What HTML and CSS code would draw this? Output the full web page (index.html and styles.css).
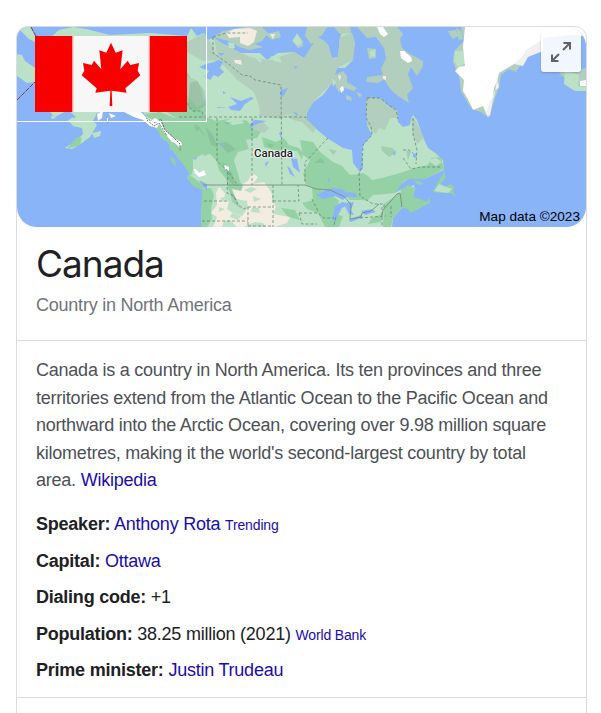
FILE: index.html
```html
<!DOCTYPE html>
<html lang="en">
<head>
<meta charset="utf-8">
<title>Canada</title>
<link rel="stylesheet" href="styles.css">
</head>
<body>
<article class="card">
  <div class="map">
    <svg class="terrain" viewBox="17 27 569 200" preserveAspectRatio="none" aria-hidden="true">
      <rect class="sea" x="17" y="27" width="569" height="200"/>
      <!-- mainland -->
      <path class="land" d="M35 42 51 37 59 30 73 27 86 29 110 35 150 33 187 36 191 28 197 36 204 33 207 40 214 38 223 44 233 48 236 53 260 53 267 60 278 53 294 52 304 58 312 48 318 36 323 40 328 45 332 58 338 57 340 37 343 31 352 33 355 43 352 53 353 60 345 68 337 68 332 83 323 95 312 103 307 112 307 120 315 128 327 138 343 148 352 150 353 163 360 172 363 168 362 153 363 145 372 135 367 125 366 98 380 98 390 107 397 110 398 122 403 127 410 125 411 119 413 115 417 120 423 137 428 148 435 153 443 160 444 170 433 175 425 179 408 179 400 185 394 193 400 190 414 185 415 189 411 200 400 210 393 218 392 227 201 227 202 200 204 190 200 187 190 176 186 165 178 158 170 145 160 133 150 122 143 112 110 111 97 113 93 121 97 125 90 137 82 143 72 149 65 148 77 140 83 134 82 128 73 126 68 120 76 117 68 110 55 117 50 112 35 111Z"/>
      <path class="land" d="M17 54 22 55 25 61 35 68 35 82 27 83 17 76ZM17 27H30L35 36V42L29 39Z"/>
      <!-- forest -->
      <path class="forest" d="M187 72 192 80 197 93 205 102 207 117 216 121 228 119 236 122 246 120 253 127 262 130 257 138 246 140 249 149 238 152 234 160 240 181 243 187 241 195 235 201 229 191 226 179 219 170 216 160 210 154 200 157 194 168 191 176 183 164 178 158 170 145 160 133 150 122 145 114 160 112 175 118 187 112Z"/>
      <path class="forest" d="M262 137 276 142 284 138 289 145 299 148 303 153 302 160 292 155 288 149 283 158 278 151 264 147ZM300 140 313 142 320 152 333 162 342 166 350 175 358 174 363 173 368 176 372 180 382 178 400 173 415 168 428 165 431 158 441 157 444 169 425 179 408 179 403 182 395 193 385 194 380 203 362 200 350 200 342 192 320 190 306 185 303 174 310 160 303 155Z"/>
      <path class="forest" d="M202 189 211 188 214 195 211 209 212 219 207 227H201ZM312 187 330 193 339 201 334 214 343 216 339 227H325L318 213 307 209 302 203 313 200ZM384 204 398 194 412 188 414 196 400 210 393 218 391 227H383ZM372 218 382 214 381 222 368 224ZM281 208 295 210 300 220 288 217ZM77 137 82 138 80 145 67 149ZM167 112H205V118H176Z"/>
      <!-- tundra -->
      <path class="tundra" d="M187 42 203 34 213 45 218 61 234 67 253 77 279 85 300 81 315 92 308 112 285 115 282 119 259 116 260 110 256 97 250 85 237 80 226 66 213 60 203 61 187 52ZM214 38 223 44 250 57 270 60 294 52 304 58 318 36 328 45 332 58 338 57 340 37 352 33 355 43 353 60 337 68 332 83 315 100 307 112 260 112 258 95 240 82 230 72 218 60ZM366 98 380 98 390 107 397 110 398 118 390 118 385 130 379 128 376 134 372 131 367 125ZM411 117 415 119 424 138 417 144 413 135ZM307 120 316 128 313 133 302 122 296 121 285 116 307 112ZM187 76 198 81 201 90 204 104 197 107 187 96ZM252 119 262 121 269 128 264 133 254 130Z"/>
      <path class="light" d="M193 159 203 154 208 165 208 175 200 174 193 169ZM289 151 297 151 304 163 302 174 291 165ZM344 210 355 212 360 220 350 223ZM427 160 436 158 442 162 436 166ZM213 99 228 111 239 112 257 106 256 115 241 117 222 115 211 111ZM225 121 235 118 245 123 233 125ZM373 195 387 194 391 198 381 204 376 211 363 214 351 220 350 213 360 208Z"/>
      <g class="shade"><path d="M190 83 197 81 204 90 207 105 195 112 188 107ZM205 126 213 135 218 148 211 145ZM197 126 203 132 205 138ZM218 143 226 142 236 149 228 153ZM222 161 232 173 235 186 228 180ZM230 191 237 200 240 208 232 202ZM329 149 337 151 333 155ZM381 146 392 148 397 152 389 157 382 151ZM406 150 411 152 408 160ZM224 122 232 122 227 125ZM266 143 275 145 270 148ZM194 124 201 128 196 132ZM314 163 321 158 325 163Z"/></g>
      <!-- Baffin and neighbouring islands -->
      <path class="tundra" d="M357 27 367 38 376 37 384 48 386 58 381 69 383 75 367 77 366 82 378 83 384 79 391 90 398 96 409 103 407 95 413 88 408 74 411 67 417 76 423 66 423 61 410 54 402 48 400 39 403 34 397 27ZM367 48 376 49 376 58 369 59ZM318 71 324 70 329 75 326 77ZM333 76 343 71 347 76 347 82 357 88 354 91 345 88 339 92 336 87ZM346 95 351 97 352 101 346 99ZM356 92 362 94 360 98ZM213 37 223 31 246 27H262L268 33 262 41 254 44 263 47 250 50 239 47 232 42ZM265 34 279 31 281 37 272 40ZM292 41 297 33 303 41 303 46 298 48ZM307 27H327L320 39 311 44 305 36ZM334 27H350L351 33 340 34Z"/>
      <path class="light" d="M293 41 297 34 302 42 298 46ZM228 42 234 43 235 48 229 48ZM253 55 262 60 260 63ZM270 56 280 58 282 63 274 61ZM370 51 375 50 375 56 370 57ZM332 78 336 82 333 87Z"/>
      <!-- dry plains -->
      <path class="plain" d="M226 33 234 29 250 28 257 31 254 42 248 46 240 43 240 37 229 38ZM234 60 241 60 242 65 235 63ZM270 34 275 34 273 39ZM338 76 341 75 340 81ZM383 76 386 76 386 80 383 79ZM216 193 219 187 225 193 224 199 229 202 227 209 233 213 242 216 248 207 247 201 236 199 232 189 241 191 244 183 248 181 252 173 258 177 253 184 264 182 269 189 272 194 272 200 276 207 273 214 290 217 287 223 275 227H266L263 223 255 222 250 224 244 227H237L230 220 224 221 222 227H213L217 217 211 213 217 205Z"/>
      <path class="light" d="M244 190 251 187 257 189 250 193ZM253 196 261 199 254 202ZM252 208 259 208 260 213 251 212ZM220 198 226 197 223 202ZM219 207 225 209 219 212ZM232 213 241 216 238 220 230 217Z"/>
      <!-- lakes -->
      <path class="sea" d="M199 67 206 64 214 62 219 60 223 62 220 68 224 72 218 77 214 75 210 80 205 77 209 71ZM218 53 225 53 221 56ZM230 97 241 101 251 97 254 98 245 104 240 111 231 110 228 107 237 104ZM217 107 227 108 217 108ZM223 91 226 93 223 94ZM281 90 288 88 283 97 280 95ZM294 66 298 67 295 69ZM293 112 298 113 297 116ZM250 124 255 120 267 121 257 124 250 128ZM279 133 282 131 281 138ZM265 163 269 161 266 167ZM291 158 297 159 300 173 293 167ZM287 166 290 168 295 177 290 174ZM316 195 326 190 334 188 341 190 338 187 346 192 355 193 358 197 346 197 343 200 335 196 323 199ZM334 207 342 202 350 204 342 208 337 217 335 223 332 218 334 212ZM343 203 354 202 351 210 354 215 349 214ZM348 220 361 215 363 217 351 222ZM361 211 372 209 376 212 365 215ZM413 153 417 154 416 158 413 157ZM220 143 225 144 222 146ZM193 158 198 157 195 160ZM318 37 330 33 332 37 326 42ZM393 152 396 153 394 156ZM327 179 330 178 329 182ZM199 180 207 184 207 190 202 186Z"/>
      <path class="land" d="M92 133 101 131 100 136 94 138ZM52 115 56 118 51 119ZM70 119 73 117 72 121Z"/>
      <path class="forest" d="M159 129 163 133 165 141 160 137ZM165 135 171 143 167 142ZM169 143 173 150 170 150ZM170 156 175 160 176 167 171 161ZM187 175 193 177 204 186 203 190 193 186 187 178ZM444 172 446 177 440 185 445 187 450 184 454 187 453 191 456 197 450 193 442 193 433 192 437 184ZM401 190 408 185 415 188 412 197 420 199 427 202 429 197 430 203 424 206 411 213 408 209 400 207ZM414 181 419 181 424 184 419 185Z"/>
      <path class="light" d="M439 184 444 186 452 189 448 193 434 191Z"/>
      <!-- Greenland and Iceland -->
      <path class="tundra" d="M461 27 464 41 454 51 453 62 459 76 461 91 469 105 474 110 481 112 489 118 495 98 499 88 501 75 509 69 516 72 523 61 530 50 540 49 543 27ZM448 31 456 30 458 36 453 39 450 35ZM456 28 461 31 463 39 459 40ZM559 73 565 68 573 71 586 68V91H575L565 84 566 79Z"/>
      <path class="light" d="M455 51 463 51 466 63 458 67 454 61ZM565 70 579 75 578 86 586 87V91H575L564 84Z"/>
      <path class="ice" d="M465 27 463 47 464 57 465 66 459 67 455 71 464 80 463 91 469 101 473 110 483 106 488 117 492 104 494 88 497 81 499 73 509 67 519 61 527 51 534 45 543 43 551 35 586 36 586 27ZM400 51 404 51 411 57 412 61 408 63 401 58ZM377 27H383L388 34 384 37 380 34ZM580 81 586 80V86H580ZM340 88 343 86 344 90 341 93Z"/>
      <path class="snow-shade" d="M534 45 543 39V51L528 57 523 66 514 64 509 68 523 56 526 50ZM497 79 499 87 494 92 490 116 486 114 490 100 494 98Z"/>
      <path class="sea" d="M543 29Q572 24 586 44V68H543Z"/>
      <path class="ice" d="M543 27H572Q580 31 582 34L561 36 543 38Z"/>
      <path class="ice" d="M124 112 141 112 146 117 152 120 155 118 160 121 164 129 172 137 181 142 182 145 179 147 175 143 172 142 163 131 159 124 157 128 150 126 143 120 134 117 128 114ZM97 114 103 111 102 118 98 121ZM109 113 116 116 111 118ZM193 169 196 169 199 173 204 170 206 175 199 177 195 173ZM224 165 229 167 229 171 225 169Z"/>
      <!-- borders -->
      <path class="rough" d="M146 118 155 123 161 119 165 130 173 137 180 144 180 151M147 120 154 126 159 123 167 136"/>
      <path class="dash" d="M213 37 226 33 248 33M213 37V53L230 65 242 75 250 76 255 80 281 85 282 185M179 117H306L307 120M217 118 217 161 228 171 238 186M252 118V185M367 98H380L390 106 396 110 398 119M367 98 366 118 371 126 372 135 363 145 362 167 359 173M328 138 305 162V183M359 173 360 196 373 204 384 204 384 209M228 172 227 193 234 196 238 205 244 209 248 207H273M273 185V227M204 201H228M202 221H248M248 207V227M248 226H273M273 201H299L298 185M299 213H318L324 218H334M299 213 302 224H317M312 199 318 211M336 217 334 225M413 118V134L417 150 416 164M403 150H409L413 153M403 158 411 169 421 167H441M187 103 192 111H202L203 117M360 218 386 216M382 207 382 227M391 206 391 217"/>
      <path class="border" d="M203 185H305L316 189 330 190 345 197 351 205 350 219 361 217 362 213 371 211 379 204M382 216 383 210 397 194 400 193 402 207"/>
      <path class="dateline" d="M31 27 36 36M17 100 35 82"/>
      <path class="frame" d="M17 121.5H206.500V27"/>
      <path class="frame" d="M107.500 118V122"/>
    </svg>
    <svg class="flag" viewBox="0 0 152 76" aria-label="Flag of Canada">
      <rect class="flag-white" width="152" height="76"/>
      <path class="flag-red" d="M0 0H37.500V76H0ZM114.500 0H152V76H114.500Z"/>
      <path class="flag-edge" d="M38 0V76M114 0V76"/>
      <path class="flag-red" transform="translate(-25 -16) scale(.333333)" d="M303 68 289 98 268 91 274 148 252 122 245 135 219 129 223 152 215 166 260 205 256 218 301 212 299 258H307L305 212 350 218 346 205 391 166 383 152 387 129 361 135 353 122 331 148 338 91 317 98Z"/>
    </svg>
    <span class="place">Canada</span>
    <button class="expand" aria-label="Expand map">
      <svg viewBox="0 0 40 40"><path d="M22 18 29 11M22.500 11H29V17.500M18 22 11 29M11 22.500V29H17.500"/></svg>
    </button>
    <span class="credit">Map data ©2023</span>
  </div>
  <header class="heading">
    <h1>Canada</h1>
    <p>Country in North America</p>
  </header>
  <section class="details">
    <p class="summary">Canada is a country in North America. Its ten provinces and three<br>territories extend from the Atlantic Ocean to the Pacific Ocean and<br>northward into the Arctic Ocean, covering over 9.98 million square<br>kilometres, making it the world's second-largest country by total<br>area. <a>Wikipedia</a></p>
    <p class="fact"><b>Speaker:</b> <a>Anthony Rota</a> <a class="small">Trending</a></p>
    <p class="fact"><b>Capital:</b> <a>Ottawa</a></p>
    <p class="fact"><b>Dialing code:</b> +1</p>
    <p class="fact"><b>Population:</b> 38.25 million (2021) <a class="small">World Bank</a></p>
    <p class="fact"><b>Prime minister:</b> <a>Justin Trudeau</a></p>
  </section>
</article>
</body>
</html>
```
FILE: styles.css
```css
* { box-sizing: border-box; }
html { overflow: hidden; }
body {
  margin: 0;
  padding: 26px 14px 0 16px;
  height: 713px;
  overflow: hidden;
  background: #fff;
  color: #202124;
  font: 18px/27.5px "Liberation Sans", Arial, sans-serif;
  letter-spacing: -.23px;
}
h1, p { margin: 0; }
a { color: #1a0dab; }
.card {
  height: 720px;
  border: 1px solid #dadce0;
  border-radius: 12px 12px 0 0;
}
.map {
  position: relative;
  height: 200px;
  overflow: hidden;
  border-radius: 11px 19px 20px 20px;
}
.terrain { display: block; width: 569px; height: 200px; }
.sea { fill: #8ab4f8; }
.land, .light { fill: #bbe2c6; }
.forest { fill: #94d2a5; }
.tundra { fill: #b1cfbc; }
.plain { fill: #f3ece0; }
.ice { fill: #fff; }
.snow-shade { fill: #f0f0f0; }
.shade { fill: #76aa89; opacity: .35; }
.dash, .border, .rough, .dateline, .frame { fill: none; }
.dash { stroke: #607b70; stroke-width: .7; stroke-dasharray: 3 2; }
.border { stroke: #72877c; stroke-width: .8; }
.rough { stroke: #777; stroke-width: 1; stroke-dasharray: 2 1; }
.dateline { stroke: #75434b; stroke-width: 1; stroke-dasharray: 5 1; }
.frame { stroke: #fff; stroke-width: 1; }
.flag { position: absolute; left: 18px; top: 9px; width: 152px; height: 76px; }
.flag-white { fill: #f7f7f7; }
.flag-red { fill: #f90000; }
.flag-edge { stroke: #fbb; stroke-width: 1; }
.place {
  position: absolute;
  left: 237px;
  top: 118px;
  font: 500 11.5px/16px Roboto, sans-serif;
  letter-spacing: 0;
  color: #202124;
  text-shadow: 0 0 2px #fff, 0 0 2px #fff, 1px 0 1px #fff, -1px 0 1px #fff;
}
.expand {
  position: absolute;
  right: 5px;
  top: 5px;
  width: 40px;
  height: 40px;
  padding: 0;
  border: 0;
  border-radius: 3px;
  background: rgba(255, 255, 255, .88);
  box-shadow: 0 1px 2px rgba(60, 64, 67, .3);
}
.expand svg { display: block; fill: none; stroke: #5f6368; stroke-width: 2; }
.credit {
  position: absolute;
  right: 6px;
  bottom: 2px;
  color: #000;
  font-size: 13.6px;
  line-height: 16px;
  letter-spacing: 0;
}
.heading { height: 114px; padding: 16px 19px 0; border-bottom: 1px solid #dadce0; }
h1 { font: 400 37px/42px Inter, sans-serif; letter-spacing: -1px; }
.heading p { margin-top: 7px; color: #70757a; }
.details { height: 357px; padding: 16px 19px 0; border-bottom: 1px solid #dadce0; }
.summary { margin-bottom: 16.500px; color: #4d5156; }
.fact { height: 36.500px; }
.small { font-size: 14px; letter-spacing: -.15px; }
```
